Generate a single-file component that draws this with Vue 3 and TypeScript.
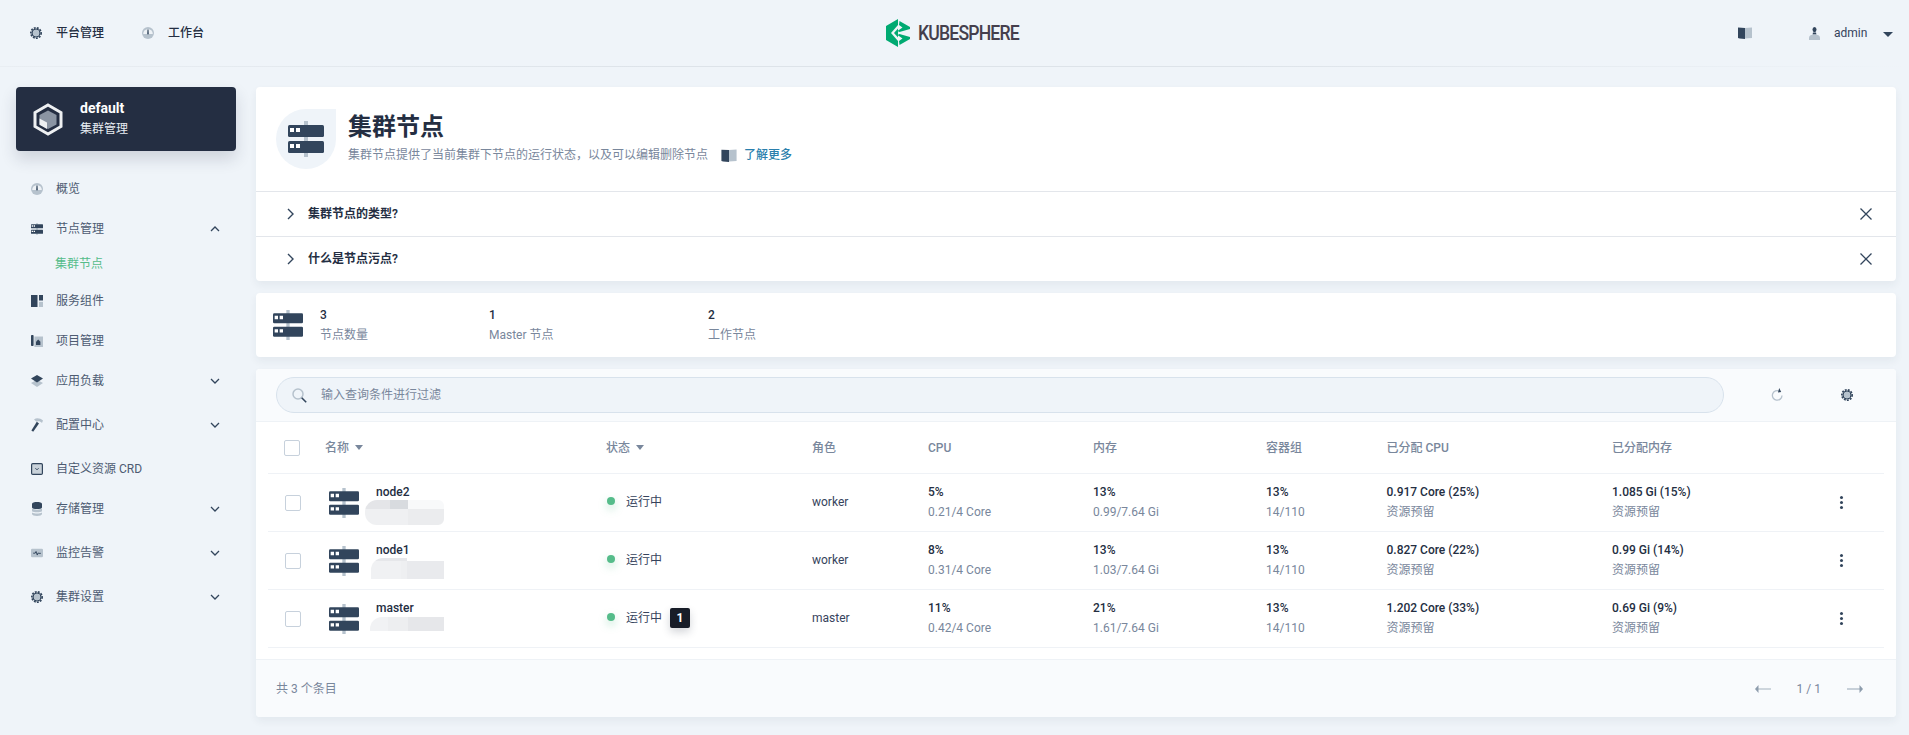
<script setup lang="ts">
interface Nav { label: string; icon: string; chevron?: 'up' | 'down'; sub?: boolean; mt: number }
const navs: Nav[] = [
  { label: '概览', icon: 'i-dash', mt: 28 },
  { label: '节点管理', icon: 'i-srv', chevron: 'up', mt: 20 },
  { label: '集群节点', icon: '', sub: true, mt: 15 },
  { label: '服务组件', icon: 'i-comp', mt: 17 },
  { label: '项目管理', icon: 'i-proj', mt: 20 },
  { label: '应用负载', icon: 'i-layer', chevron: 'down', mt: 20 },
  { label: '配置中心', icon: 'i-hammer', chevron: 'down', mt: 24 },
  { label: '自定义资源 CRD', icon: 'i-crd', mt: 24 },
  { label: '存储管理', icon: 'i-db', chevron: 'down', mt: 20 },
  { label: '监控告警', icon: 'i-mon', chevron: 'down', mt: 24 },
  { label: '集群设置', icon: 'i-gear', chevron: 'down', mt: 24 },
]
const stats = [
  { value: '3', label: '节点数量', cls: 'st-a' },
  { value: '1', label: 'Master 节点', cls: 'st-b' },
  { value: '2', label: '工作节点', cls: 'st-c' },
]
const heads = [
  { t: '名称', sort: true }, { t: '状态', sort: true }, { t: '角色' }, { t: 'CPU' }, { t: '内存' },
  { t: '容器组' }, { t: '已分配 CPU' }, { t: '已分配内存' },
]
const rows = [
  { name: 'node2', patch: 'patch-a', role: 'worker', badge: '', cpu: ['5%', '0.21/4 Core'], mem: ['13%', '0.99/7.64 Gi'], pods: ['13%', '14/110'], ac: '0.917 Core (25%)', am: '1.085 Gi (15%)' },
  { name: 'node1', patch: 'patch-b', role: 'worker', badge: '', cpu: ['8%', '0.31/4 Core'], mem: ['13%', '1.03/7.64 Gi'], pods: ['13%', '14/110'], ac: '0.827 Core (22%)', am: '0.99 Gi (14%)' },
  { name: 'master', patch: 'patch-c', role: 'master', badge: '1', cpu: ['11%', '0.42/4 Core'], mem: ['21%', '1.61/7.64 Gi'], pods: ['13%', '14/110'], ac: '1.202 Core (33%)', am: '0.69 Gi (9%)' },
]
const tips = ['集群节点的类型?', '什么是节点污点?']
</script>

<template>
  <div class="page">
    <svg class="defs" aria-hidden="true">
      <defs>
        <symbol id="i-srv" viewBox="0 0 36 36">
          <rect x="16" y="0" width="4" height="36" fill="#b6c2cd" />
          <rect x="0" y="4" width="36" height="12" rx="1.5" fill="#32455c" />
          <rect x="0" y="20" width="36" height="12" rx="1.5" fill="#32455c" />
          <path d="M2 7h4v4H2zM8 7h4v4H8zM2 23h4v4H2zM8 23h4v4H8z" fill="#fff" />
        </symbol>
        <symbol id="i-gear" viewBox="0 0 12 12">
          <circle cx="6" cy="6" r="5.200" fill="none" stroke="#32455c" stroke-width="1.600" stroke-dasharray="1.900 1.190" />
          <circle cx="6" cy="6" r="3.900" fill="none" stroke="#32455c" stroke-width="1.400" />
          <circle cx="6" cy="6" r="3.200" fill="#b6c2cd" />
        </symbol>
        <symbol id="i-dash" viewBox="0 0 12 12">
          <circle cx="6" cy="6" r="6" fill="#b6c2cd" />
          <path d="M1.200 7a4.800 4.800 0 1 1 9.600 0z" fill="#eef2f6" />
          <path d="M5.500 2.600h1l.3 4.200a.8.8 0 0 1-1.600 0z" fill="#32455c" />
        </symbol>
        <symbol id="i-comp" viewBox="0 0 12 12">
          <path d="M0 0h6.500v12H0zM8 0h4v5.600H8z" fill="#32455c" />
          <path d="M8 6.800h4V12H8z" fill="#b6c2cd" />
        </symbol>
        <symbol id="i-proj" viewBox="0 0 12 12">
          <path d="M3.400 1.500H12V12H3.400z" fill="#b6c2cd" />
          <rect x="0" y="0" width="2.600" height="11" rx=".8" fill="#32455c" />
          <path d="M5 10V6.800L7.200 4.600 9.400 6.800V10z" fill="#32455c" />
        </symbol>
        <symbol id="i-layer" viewBox="0 0 12 12">
          <path d="M6 4.800 12 8l-6 4-6-4z" fill="#b6c2cd" />
          <path d="M6 0 12 3.600 6 7.400 0 3.600z" fill="#32455c" />
        </symbol>
        <symbol id="i-hammer" viewBox="0 0 12 14">
          <path d="M5.800 3.800 8 5.600 2.200 13.800.4 12.600z" fill="#32455c" />
          <path d="M3 1.400C5.600-.4 9.400.2 12 2.600L11 5C9.500 3.300 7 2.800 5.400 3.800z" fill="#b6c2cd" />
        </symbol>
        <symbol id="i-crd" viewBox="0 0 12 12">
          <rect x=".6" y=".6" width="10.800" height="10.800" rx="1.200" fill="#c9d2da" stroke="#32455c" stroke-width="1.200" />
          <path d="M4.400 5.200 6 6.800l1.600-1.600" fill="none" stroke="#32455c" stroke-width="1" />
        </symbol>
        <symbol id="i-db" viewBox="0 0 10 14">
          <path d="M0 2c0-2.600 10-2.600 10 0v3.400c0 2-10 2-10 0z" fill="#32455c" />
          <path d="M0 6.600c2 1.400 8 1.400 10 0v2.600c-2 1.400-8 1.400-10 0z" fill="#b6c2cd" />
          <path d="M0 10.400c2 1.400 8 1.400 10 0V12c0 2.600-10 2.600-10 0z" fill="#b6c2cd" />
        </symbol>
        <symbol id="i-mon" viewBox="0 0 14 10">
          <rect width="14" height="10" rx="1.600" fill="#b6c2cd" />
          <path d="M2.500 5.200h2.400l1-2 1.400 4.200 1-2.600 .6.600h2.600" fill="none" stroke="#32455c" stroke-width="1.100" />
        </symbol>
        <symbol id="i-book" viewBox="0 0 14 12">
          <path d="M0 .6 7 1v11L1.600 11.600 0 11z" fill="#32455c" />
          <path d="M7 1l7-.6V11l-7 .6z" fill="#b6c2cd" />
        </symbol>
        <symbol id="i-user" viewBox="0 0 11 13">
          <ellipse cx="5.500" cy="2.600" rx="2" ry="2.600" fill="#32455c" />
          <path d="M4 5.600h3l.4 1.800H3.600z" fill="#32455c" />
          <path d="M0 13v-2.400C0 8.600 2.400 7.400 5.500 7.400s5.500 1.200 5.500 3.200V13z" fill="#b6c2cd" />
        </symbol>
      </defs>
    </svg>

    <header class="topbar">
      <div class="top-left">
        <a class="top-link"><svg class="ico12"><use href="#i-gear" /></svg>平台管理</a>
        <a class="top-link"><svg class="ico12"><use href="#i-dash" /></svg>工作台</a>
      </div>
      <div class="logo">
        <svg class="logo-mark" viewBox="0 0 24 28">
          <path d="M12 0 0 7v14l12 7v-6L5 14l7-8z" fill="#00aa72" />
          <path d="M13.500 2 24 8v2l-10.500 3-2-1 5-3.600-3.500-2.400zM13.500 26 24 20v-2l-10.500-3-2 1 5 3.600-3.500 2.400z" fill="#00aa72" />
          <path d="M12 9.500 8 14l4 4.500z" fill="#00aa72" />
        </svg>
        <span class="logo-text">KUBESPHERE</span>
      </div>
      <div class="top-right">
        <svg class="top-book"><use href="#i-book" /></svg>
        <svg class="top-user"><use href="#i-user" /></svg>
        <span class="admin">admin</span>
        <span class="caret"></span>
      </div>
    </header>

    <div class="body">
      <aside class="sidebar">
        <div class="cluster">
          <svg class="cube" viewBox="0 0 30 33">
            <path d="M15 2 28 9.500v14L15 31 2 23.500v-14z" fill="none" stroke="#eef0f2" stroke-width="3" />
            <path d="M15 7.500 23.500 12v9.500L15 26l-8.500-4.500V12z" fill="#8b95a3" />
            <path d="M6.500 15.500 14 19.500v6.500l-7.500-4.200z" fill="#eef0f2" />
          </svg>
          <div class="cluster-text">
            <strong>default</strong>
            <span>集群管理</span>
          </div>
        </div>
        <nav>
          <div
            v-for="n in navs"
            :key="n.label"
            class="nav-item"
            :class="{ 'nav-sub': n.sub }"
            :style="{ marginTop: n.mt + 'px' }"
          >
            <span v-if="!n.sub" class="nav-ico"><svg><use :href="'#' + n.icon" /></svg></span>
            <span class="nav-label">{{ n.label }}</span>
            <svg v-if="n.chevron" class="nav-chev" viewBox="0 0 10 6">
              <path :d="n.chevron === 'up' ? 'M1 5l4-4 4 4' : 'M1 1l4 4 4-4'" fill="none" stroke="#32455c" stroke-width="1.300" />
            </svg>
          </div>
        </nav>
      </aside>

      <main class="main">
        <section class="card banner">
          <div class="banner-head">
            <div class="blob"><svg><use href="#i-srv" /></svg></div>
            <div class="banner-text">
              <h1>集群节点</h1>
              <p>
                集群节点提供了当前集群下节点的运行状态，以及可以编辑删除节点
                <svg class="learn-book"><use href="#i-book" /></svg>
                <a>了解更多</a>
              </p>
            </div>
          </div>
          <div v-for="t in tips" :key="t" class="tip">
            <svg class="tip-arrow" viewBox="0 0 7 12"><path d="M1 1l5 5-5 5" fill="none" stroke="#32455c" stroke-width="1.400" /></svg>
            <span>{{ t }}</span>
            <svg class="tip-x" viewBox="0 0 12 12"><path d="M.5.500l11 11M11.500.500l-11 11" fill="none" stroke="#32455c" stroke-width="1.300" /></svg>
          </div>
        </section>

        <section class="card stats">
          <svg class="stats-ico"><use href="#i-srv" /></svg>
          <div v-for="s in stats" :key="s.label" class="stat" :class="s.cls">
            <b>{{ s.value }}</b>
            <span>{{ s.label }}</span>
          </div>
        </section>

        <section class="card tablecard">
          <div class="toolbar">
            <div class="search">
              <svg class="search-ico" viewBox="0 0 15 15">
                <circle cx="6" cy="6" r="5" fill="none" stroke="#b6c2cd" stroke-width="1.500" />
                <path d="M9.700 9.700l4.500 4.500" stroke="#32455c" stroke-width="1.600" />
              </svg>
              <span>输入查询条件进行过滤</span>
            </div>
            <svg class="refresh" viewBox="0 0 12 14">
              <path d="M8.500 3.200A4.800 4.800 0 1 0 11 7.500" fill="none" stroke="#b6c2cd" stroke-width="1.300" />
              <path d="M7 4.500 8.200 0l2 4z" fill="#32455c" />
            </svg>
            <svg class="tool-gear"><use href="#i-gear" /></svg>
          </div>

          <div class="grid thead">
            <div class="cell-first"><span class="check head-check"></span>{{ heads[0].t }}<i class="sort"></i></div>
            <div v-for="h in heads.slice(1)" :key="h.t">{{ h.t }}<i v-if="h.sort" class="sort"></i></div>
          </div>

          <div v-for="r in rows" :key="r.name" class="grid trow">
            <div class="cell-first name-cell">
              <span class="check"></span>
              <svg class="row-ico"><use href="#i-srv" /></svg>
              <div class="name-text">
                <b>{{ r.name }}</b>
                <span class="patch" :class="r.patch"></span>
              </div>
            </div>
            <div class="status">
              <i class="dot"></i><span>运行中</span>
              <em v-if="r.badge" class="badge">{{ r.badge }}</em>
            </div>
            <div class="role">{{ r.role }}</div>
            <div class="two"><b>{{ r.cpu[0] }}</b><span>{{ r.cpu[1] }}</span></div>
            <div class="two"><b>{{ r.mem[0] }}</b><span>{{ r.mem[1] }}</span></div>
            <div class="two"><b>{{ r.pods[0] }}</b><span>{{ r.pods[1] }}</span></div>
            <div class="two"><b>{{ r.ac }}</b><span>资源预留</span></div>
            <div class="two"><b>{{ r.am }}</b><span>资源预留</span></div>
            <div class="more"><i></i><i></i><i></i></div>
          </div>

          <footer class="tfoot">
            <span>共 3 个条目</span>
            <div class="pager">
              <svg class="pg" viewBox="0 0 16 10"><path d="M16 5H3" stroke="#b6c2cd" stroke-width="1.300" /><path d="M0 5l3.500-4v8z" fill="#8d9cac" /></svg>
              <span class="pg-num">1 / 1</span>
              <svg class="pg" viewBox="0 0 16 10"><path d="M0 5h13" stroke="#b6c2cd" stroke-width="1.300" /><path d="M16 5l-3.500-4v8z" fill="#8d9cac" /></svg>
            </div>
          </footer>
        </section>
      </main>
    </div>
  </div>
</template>

<style>
html, body { margin: 0; background: #eff4f9; }
</style>

<style scoped>
.page {
  width: 1909px;
  height: 735px;
  overflow: hidden;
  background: #eff4f9;
  font-family: Roboto, "Noto Sans CJK SC", sans-serif;
  font-size: 12px;
  line-height: 20px;
  color: #36435c;
}
.defs { position: absolute; width: 0; height: 0; }

.topbar {
  position: relative;
  height: 66px;
  display: grid;
  grid-template-columns: 1fr auto 1fr;
  align-items: center;
}
.topbar::after {
  content: "";
  position: absolute;
  left: 0;
  right: 0;
  bottom: -1px;
  height: 1px;
  background: linear-gradient(to right, #e9eef3 0, #dde3e9 35%, #dde3e9 65%, #eff4f9 100%);
}
.top-left { display: flex; padding-left: 30px; gap: 38px; }
.top-link { display: flex; align-items: center; gap: 14px; font-weight: 500; color: #242e42; }
.ico12 { width: 12px; height: 12px; }
.logo { display: flex; align-items: center; gap: 8px; margin-left: -4px; }
.logo-mark { width: 24px; height: 28px; }
.logo-text {
  font-family: Roboto, sans-serif;
  font-size: 21px;
  font-weight: 500;
  line-height: 28px;
  letter-spacing: -1px;
  color: #453f4d;
  transform: scaleX(0.84);
  transform-origin: left center;
  margin-right: -20px;
}
.top-right { display: flex; align-items: center; justify-content: flex-end; }
.top-book { width: 14px; height: 12px; margin-right: 57px; }
.top-user { width: 11px; height: 13px; margin-right: 14px; }
.admin { width: 33px; color: #36435c; }
.caret {
  width: 0;
  height: 0;
  margin: 2px 16px 0 16px;
  border-left: 5px solid transparent;
  border-right: 5px solid transparent;
  border-top: 5px solid #32455c;
}

.body { display: flex; padding-top: 21px; }
.sidebar { width: 220px; margin: 0 20px 0 16px; flex: none; }
.cluster {
  height: 64px;
  box-sizing: border-box;
  display: flex;
  align-items: center;
  padding-left: 17px;
  gap: 17px;
  border-radius: 4px;
  background: #242e42;
  box-shadow: 0 8px 16px rgba(36, 46, 66, 0.16);
  color: #fff;
}
.cube { width: 30px; height: 33px; }
.cluster-text { display: flex; flex-direction: column; margin-top: -2px; }
.cluster-text strong { font-size: 14px; line-height: 20px; font-weight: 700; }
.cluster-text span { line-height: 20px; margin-top: 1px; color: #e8edf2; }

.nav-item { display: flex; align-items: center; height: 20px; padding: 0 16px 0 15px; color: #4d5b72; }
.nav-ico { width: 12px; height: 14px; margin-right: 13px; display: flex; align-items: center; justify-content: center; }
.nav-ico svg { width: 12px; height: 14px; overflow: visible; }
.nav-label { flex: 1; }
.nav-sub { padding-left: 39px; color: #55bc8a; }
.nav-chev { width: 10px; height: 6px; }

.main { width: 1640px; flex: none; display: flex; flex-direction: column; gap: 12px; }
.card {
  background: #fff;
  border-radius: 4px;
  box-shadow: 0 4px 8px rgba(36, 46, 66, 0.06);
}

.banner-head { height: 104px; display: flex; padding: 22px 0 0 20px; box-sizing: border-box; gap: 12px; }
.blob {
  width: 60px;
  height: 60px;
  border-radius: 50% 0 50% 50%;
  background: #eff4f9;
  display: flex;
  align-items: center;
  justify-content: center;
}
.blob svg { width: 36px; height: 36px; }
.banner-text h1 {
  margin: 2px 0 0;
  font-size: 24px;
  line-height: 32px;
  font-weight: 600;
  color: #242e42;
}
.banner-text p { margin: 2px 0 0; display: flex; align-items: center; color: #79879c; }
.learn-book { width: 16px; height: 13px; margin: 0 7px 0 13px; }
.banner-text a { color: #2a7fad; font-weight: 500; }
.tip {
  height: 45px;
  box-sizing: border-box;
  display: flex;
  align-items: center;
  border-top: 1px solid #e3e6eb;
  padding: 0 24px 0 31px;
  font-weight: 600;
  color: #242e42;
}
.tip-arrow { width: 7px; height: 12px; margin-right: 14px; }
.tip span { flex: 1; }
.tip-x { width: 12px; height: 12px; }

.stats { height: 64px; position: relative; display: flex; align-items: center; }
.stats-ico { width: 30px; height: 30px; margin-left: 17px; flex: none; }
.stat { display: flex; flex-direction: column; }
.stat b { font-weight: 500; color: #242e42; line-height: 20px; }
.stat span { color: #79879c; line-height: 20px; }
.st-a { margin-left: 17px; width: 169px; flex: none; }
.st-b { width: 219px; flex: none; }

.tablecard { height: 348px; display: flex; flex-direction: column; overflow: hidden; }
.toolbar {
  height: 53px;
  box-sizing: border-box;
  display: flex;
  align-items: center;
  padding-left: 20px;
  background: #f9fbfd;
  border-bottom: 1px solid #eef2f6;
}
.search {
  width: 1448px;
  height: 36px;
  box-sizing: border-box;
  display: flex;
  align-items: center;
  padding-left: 15px;
  border: 1px solid #d8e2ec;
  border-radius: 18px;
  background: #eff4f9;
  color: #79879c;
}
.search-ico { width: 15px; height: 15px; margin-right: 14px; }
.refresh { width: 12px; height: 14px; margin-left: 47px; }
.tool-gear { width: 12px; height: 12px; margin-left: 58px; }

.grid {
  display: grid;
  grid-template-columns: 337px 206px 116px 165px 173px 120.5px 225.5px 220px 1fr;
  margin: 0 12px;
  padding-left: 1px;
  align-items: center;
  border-bottom: 1px solid #eff2f6;
}
.thead { height: 52px; box-sizing: border-box; color: #79879c; font-weight: 500; }
.cell-first { display: flex; align-items: center; }
.check {
  width: 16px;
  height: 16px;
  box-sizing: border-box;
  border: 1px solid #c7d1dc;
  border-radius: 2px;
  background: #fff;
  flex: none;
  margin-left: 16px;
}
.head-check { margin-left: 15px; margin-right: 25px; }
.sort {
  display: inline-block;
  margin-left: 6px;
  vertical-align: 2px;
  border-left: 4.500px solid transparent;
  border-right: 4.500px solid transparent;
  border-top: 5px solid #79879c;
}
.trow { height: 58px; box-sizing: border-box; }
.name-cell { white-space: nowrap; }
.row-ico { width: 30px; height: 30px; margin-left: 28px; flex: none; }
.name-text { position: relative; margin: -22px 0 0 17px; }
.name-text b { font-weight: 500; color: #242e42; }
.patch { position: absolute; display: block; }
.patch-a {
  left: -11px;
  top: 18px;
  width: 79px;
  height: 25px;
  border-radius: 12px 6px 6px 12px;
  background:
    linear-gradient(to right, #e4e5e8 25px, #d8dbdf 25px 43px, #f8f9fa 43px) top / 100% 9px no-repeat,
    linear-gradient(to right, #eff0f2 43px, #ebecee 43px) bottom / 100% 16px no-repeat;
}
.patch-b {
  left: -5px;
  top: 18px;
  width: 73px;
  height: 21px;
  border-radius: 12px 0 0 0;
  background:
    linear-gradient(to right, #e6e7ea 36px, #fff 36px) top / 100% 3px no-repeat,
    linear-gradient(to right, #f0f1f3 30px, #eeeff1 30px 36px, #e9eaed 36px) bottom / 100% 18px no-repeat;
}
.patch-c {
  left: -6px;
  top: 19px;
  width: 74px;
  height: 14px;
  border-radius: 12px 0 0 0;
  background: linear-gradient(to right, #f1f2f4 18px, #edeef0 18px 38px, #e6e7ea 38px);
}
.status { display: flex; align-items: center; color: #36435c; margin-top: -1px; }
.dot {
  width: 8px;
  height: 8px;
  margin: -2px 11px 0 1px;
  border-radius: 50%;
  background: #55bc8a;
  box-shadow: 0 4px 8px rgba(85, 188, 138, 0.36);
}
.badge {
  width: 20px;
  height: 20px;
  margin-left: 8px;
  border-radius: 2px;
  background: #181d28;
  color: #fff;
  font-style: normal;
  font-weight: 700;
  text-align: center;
  box-shadow: 0 4px 8px rgba(36, 46, 66, 0.2);
}
.role { color: #36435c; margin-top: -1px; }
.two { display: flex; flex-direction: column; margin-top: -1px; }
.two b { font-weight: 500; color: #242e42; }
.two span { color: #79879c; }
.more { display: flex; flex-direction: column; align-items: center; gap: 2px; width: 12px; margin-left: 3px; }
.more i { width: 3px; height: 3px; border-radius: 50%; background: #32455c; }

.tfoot {
  margin-top: auto;
  height: 58px;
  box-sizing: border-box;
  display: flex;
  align-items: center;
  justify-content: space-between;
  padding: 0 33px 0 20px;
  background: #f9fbfd;
  border-top: 1px solid #eef2f6;
  color: #79879c;
}
.pager { display: flex; align-items: center; gap: 26px; }
.pg { width: 16px; height: 10px; }
.pg-num { color: #79879c; }
</style>
